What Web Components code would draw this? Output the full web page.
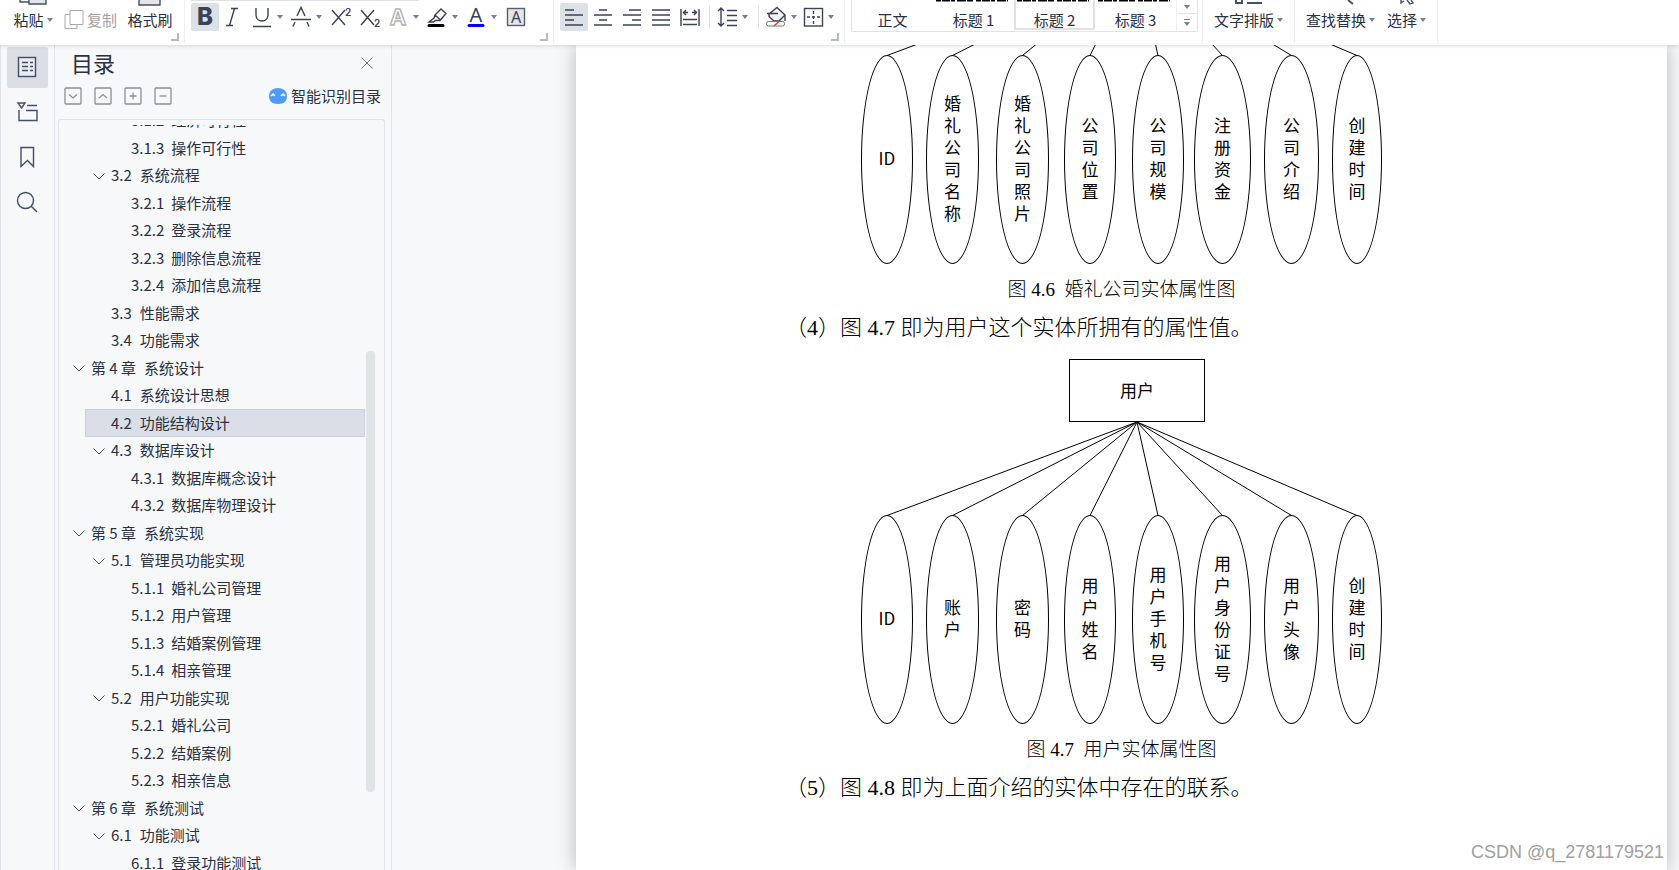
<!DOCTYPE html>
<html lang="zh-CN">
<head>
<meta charset="utf-8">
<title>文档编辑</title>
<style>
html,body{height:100%}
body{margin:0;overflow:hidden;background:#f6f8fa;color:#2a3042;font:15px/20px "Noto Sans CJK SC",sans-serif}
</style>
</head>
<body>
<office-app></office-app>
<script>
const reset = `*{box-sizing:border-box}button{font:inherit;color:inherit;background:none;border:0;padding:0;margin:0;border-radius:2px}svg{display:block;flex:none;overflow:visible}`;
function element(name, css, html) {
  customElements.define(name, class extends HTMLElement {
    constructor() {
      super();
      this.attachShadow({mode: 'open'}).innerHTML =
        `<style>${reset}${css}</style>` + (typeof html === 'function' ? html(this) : html);
    }
  });
}

const icons = {
  bold: `<text x="10" y="18" text-anchor="middle" font-family="Inter" font-weight="800" font-size="24" fill="currentColor">B</text>`,
  italic: `<path d="M8 1.500h7M3 18.500h7M11.500 1.500l-5 17"/>`,
  underline: `<path d="M4 1v7c0 8 12 8 12 0V1M1 19.500h18"/>`,
  strike: `<path d="M6 9 10 .5 14 9M0 12.500h20M4 15l-2 4.500M16 15l2 4.500"/>`,
  sup: `<path d="M1 3l13 15M14 3 1 18"/><text x="14" y="9" font-family="Inter" font-weight="600" font-size="10" fill="currentColor" stroke="none">2</text>`,
  sub: `<path d="M1 3l13 15M14 3 1 18"/><text x="14" y="20" font-family="Inter" font-weight="600" font-size="10" fill="currentColor" stroke="none">2</text>`,
  outline: `<text x="10" y="18" text-anchor="middle" font-family="Inter" font-weight="700" font-size="22" fill="#fff" stroke="#b4b4b4">A</text>`,
  marker: `<path d="M8 8l6-6 5 4.500-6 7H8.500l-2 1.500H2l5-4zM8 8l5.500 5" fill="none"/><path d="M2 18.500h14" stroke="#000" stroke-width="3" stroke-linecap="round"/>`,
  color: `<text x="10" y="15" text-anchor="middle" font-family="Noto Sans" font-size="20" fill="currentColor">A</text><path d="M3 18.500h14" stroke="#00f" stroke-width="3" stroke-linecap="round"/>`,
  boxed: `<rect x="1.500" y="1.500" width="17" height="17" fill="#e3e5e8" stroke="#5a6072"/><text x="10" y="16" text-anchor="middle" font-family="Noto Sans" font-size="16" fill="currentColor">A</text>`,
  left: `<path d="M1 3h9M1 8h18M1 13h9M1 18h18"/>`,
  center: `<path d="M6 3h8M1 8h18M6 13h8M1 18h18"/>`,
  right: `<path d="M7 3h12M1 8h18M10 13h9M1 18h18"/>`,
  justify: `<path d="M1 3h18M1 8h18M1 13h18M1 18h18"/>`,
  spread: `<path d="M1 2v17M19 2v17M3 12.500h14M3 17.500h14M3 5.500h5M12 5.500h5M6 3 3.500 5.500 6 8M14 3l2.500 2.500L14 8"/>`,
  spacing: `<path d="M4 1v18M1 4l3-3 3 3M1 16l3 3 3-3M10 3.500h10M10 8.500h10M10 13.500h10M10 18.500h10"/>`,
  bucket: `<path d="M3 7l8-6.500L19 8l-6 6H8L3 9.500zM1 6.500h11M19 8v6" fill="#f4f5f7"/><rect x=".5" y="14.500" width="18" height="4.500" rx="2" fill="#fff" stroke="#777" stroke-width="1"/><path d="M8 19l5-4.500" stroke="#e33"/>`,
  borders: `<rect x="1.500" y="1.500" width="18" height="17.500"/><path d="M10.500 4v13M4 10h13" stroke-dasharray="3 2"/>`,
  toc: `<rect x="1.500" y=".5" width="17" height="19" fill="#e9ecf0"/><path d="M5 5.500h6M5 9.500h6M5 13.500h6M13 5.500h3M13 9.500h3M13 13.500h3"/>`,
  frame: `<path d="M1 1h7L4.500 6zM10 3.500h10M2 8v10.500h18V8.500H9"/>`,
  bookmark: `<path d="M4 .5h12.500v19l-6-6-6.500 6z"/>`,
  search: `<circle cx="8.500" cy="8.500" r="8"/><path d="M14 14l6 6"/>`,
};
const icon = (n, s = 20) => `<svg width="${s}" height="${s}" viewBox="0 0 20 20" fill="none" stroke="currentColor" stroke-width="1.400" aria-hidden="true">${icons[n].replace(/<text (?![^>]*stroke=)/g, '<text stroke="none" ')}</svg>`;
const caret = `<svg class="caret" width="6" height="4" viewBox="0 0 6 4" aria-hidden="true"><path d="M0 0h6L3 4z" fill="#72809c"/></svg>`;

element('icon-button', `
:host{display:block;flex:none;width:28px}
button{display:flex;width:100%;height:28px;align-items:center;justify-content:center}
:host([on]) button{background:#dce1e6}
:host([narrow]){width:21px}
:host([split]){width:31px}
:host([split]) button{gap:5px;justify-content:flex-start}`,
  el => `<button aria-label="${el.getAttribute('label')}">${icon(el.getAttribute('icon'))}${el.hasAttribute('split') ? caret : ''}</button>`);

element('label-button', `
:host{display:block;flex:none;white-space:nowrap}
button{display:flex;flex-direction:column;align-items:center;width:100%}
span{display:flex;align-items:center;gap:3px;line-height:28px}
.top{height:6px}
:host([off]){color:#a3a3a3}`,
  el => `<button><div class="top"><slot name="icon"></slot></div><span><slot name="lead"></slot><slot></slot>${el.hasAttribute('menu') ? caret : ''}</span></button>`);

element('ribbon-group', `
:host{display:flex;flex:none;position:relative;height:43px;border-right:1px solid #eceef1}
:host([launcher])::after{content:"";position:absolute;right:5px;bottom:2px;width:6px;height:6px;border:solid #b4bccb;border-width:0 2px 2px 0}`,
  `<slot></slot>`);

element('style-gallery', `
:host{display:flex;width:347px;height:32px;border:solid #e0e2e7;border-width:0 1px 1px;border-radius:0 0 2px 2px}
button{width:81px;height:30px;display:flex;flex-direction:column;align-items:center;line-height:28px}
button[aria-pressed=true]{border:solid #dfe1e6;border-width:0 2px 2px}
button svg{height:6px}
.more{width:21px;border-left:1px solid #eceef1;display:grid;grid-template-rows:13px 18px}
.more button{width:100%;height:auto;justify-content:center}
.more button svg{height:auto}
.more button+button{border-top:1px solid #e4e6ea}`,
  () => ['正文', '标题 1', '标题 2', '标题 3'].map((t, i) =>
    `<button aria-pressed="${i === 2}"><svg width="76" height="6" aria-hidden="true">${i ? '<path d="M0 0h72" stroke="#000" stroke-width="3" stroke-dasharray="5 1 8 1 4 2 9 1 6 3"/>' : ''}</svg><span>${t}</span></button>`).join('') +
    `<div class="more"><button aria-label="向下">${caret}</button><button aria-label="更多样式"><svg width="6" height="8" viewBox="0 0 6 8" aria-hidden="true"><path d="M0 .5h6" stroke="#72809c"/><path d="M0 3h6L3 7z" fill="#72809c"/></svg></button></div>`);

element('ribbon-bar', `
:host{display:flex;flex:none;height:45px;background:#fff;box-shadow:0 1px 4px rgba(0,0,0,.14);position:relative;z-index:2}
.clip{width:185px;padding-left:9px;gap:3px}
.paste{width:48px}.copy{width:61px}.brush{width:52px}
.font{width:369px;padding:3px 0 0 6px}
.font::before{content:"";position:absolute;left:6px;top:0;width:228px;height:1px;background:#dfe1e6}
.letters{display:flex;gap:8px;margin-left:5px}
.para{width:291px;padding:3px 0 0 6px;gap:1px}
.para [split]{margin-right:5px}
hr{flex:none;width:1px;height:22px;margin:3px 6px 0 4px;border:0;background:#dfe1e6}
.styles{width:358px;padding-left:6px}
.layout{width:92px;padding-left:11px}
.edit{width:143px;padding-left:11px;gap:12px}
svg,icon-button{color:#3c4256}`,
  `<ribbon-group class="clip" launcher>
    <label-button class="paste" menu><svg slot="icon" width="28" height="5" viewBox="0 0 28 5" fill="none" stroke="#4a5062" stroke-width="1.400"><path d="M1 0v2h9M10 0v4h17V0" fill="#e3e5e8"/></svg>粘贴</label-button>
    <label-button class="copy" off><svg slot="lead" width="20" height="20" viewBox="0 0 20 20" fill="#fff" stroke="#a9a9a9"><path d="M1 4.500h12v14H1z"/><path d="M6 .5h13v14H6z"/></svg>复制</label-button>
    <label-button class="brush"><svg slot="icon" width="24" height="6" viewBox="0 0 24 6" fill="#e3e5e8" stroke="#4a5062" stroke-width="1.400"><path d="M1 0v5h21V0"/></svg>格式刷</label-button>
  </ribbon-group>
  <ribbon-group class="font" launcher>
    <icon-button icon="bold" label="加粗" on></icon-button>
    <icon-button icon="italic" label="倾斜"></icon-button>
    <div class="letters">
      <icon-button icon="underline" label="下划线" split></icon-button>
      <icon-button icon="strike" label="删除线" split></icon-button>
      <icon-button icon="sup" label="上标" narrow></icon-button>
      <icon-button icon="sub" label="下标" narrow></icon-button>
      <icon-button icon="outline" label="文字效果" split></icon-button>
      <icon-button icon="marker" label="突出显示" split></icon-button>
      <icon-button icon="color" label="字体颜色" split></icon-button>
      <icon-button icon="boxed" label="字符底纹" narrow></icon-button>
    </div>
  </ribbon-group>
  <ribbon-group class="para" launcher>
    <icon-button icon="left" label="左对齐" on></icon-button>
    <icon-button icon="center" label="居中"></icon-button>
    <icon-button icon="right" label="右对齐"></icon-button>
    <icon-button icon="justify" label="两端对齐"></icon-button>
    <icon-button icon="spread" label="分散对齐"></icon-button>
    <hr>
    <icon-button icon="spacing" label="行距" split></icon-button>
    <hr>
    <icon-button icon="bucket" label="底纹颜色" split></icon-button>
    <icon-button icon="borders" label="边框" split></icon-button>
  </ribbon-group>
  <ribbon-group class="styles"><style-gallery></style-gallery></ribbon-group>
  <ribbon-group class="layout">
    <label-button menu><svg slot="icon" width="28" height="5" viewBox="0 0 28 5" fill="none" stroke="#4a5062" stroke-width="2"><path d="M1 0v3h6V0M12 3h15"/></svg>文字排版</label-button>
  </ribbon-group>
  <ribbon-group class="edit">
    <label-button menu><svg slot="icon" width="28" height="5" viewBox="0 0 28 5" fill="none" stroke="#4a5062" stroke-width="2"><path d="M21 0l5 4"/></svg>查找替换</label-button>
    <label-button menu><svg slot="icon" width="14" height="5" viewBox="0 0 14 5" fill="none" stroke="#4a5062" stroke-width="1.400"><path d="M1 0v3l3-2M7 0l3 4 3-1-2-3"/></svg>选择</label-button>
  </ribbon-group>`);

element('side-rail', `
:host{display:flex;flex:none;flex-direction:column;gap:4px;width:55px;padding:2px 6px;border:solid #dfe2e9;border-width:0 1px}
button{width:41px;height:41px;padding:0 2px 2px 0;display:grid;place-items:center;color:#454d66}
.on{background:#dadee5}`,
  `<button class="on" aria-label="目录">${icon('toc')}</button><button aria-label="章节">${icon('frame')}</button><button aria-label="书签">${icon('bookmark')}</button><button aria-label="查找">${icon('search')}</button>`);

element('toc-entry', `
:host{display:flex;align-items:center;height:100%;padding-left:54px}
:host([level="2"]){padding-left:34px}
:host([level="1"]){padding-left:14px}
:host([current]){margin-left:26px;padding-left:7px;background:#dadee6;border:1px solid #c9d0dc}
a{display:flex;gap:8px;padding-bottom:1px;color:inherit;text-decoration:none;white-space:pre}
:host([level="3"]) a{gap:7px}
svg{margin-right:6px}`,
  el => `<svg width="12" height="8" viewBox="0 0 12 8" fill="none" stroke="#454d66" aria-hidden="true">${el.hasAttribute('open') ? '<path d="M.5 1.500 6 7l5.500-5.500"/>' : ''}</svg><a href="#"><span>${el.getAttribute('num')}</span><slot></slot></a>`);

const entries = `3 3.1.2 经济可行性|3 3.1.3 操作可行性|2+ 3.2 系统流程|3 3.2.1 操作流程|3 3.2.2 登录流程|3 3.2.3 删除信息流程|3 3.2.4 添加信息流程|2 3.3 性能需求|2 3.4 功能需求|1+ 第_4_章 系统设计|2 4.1 系统设计思想|2* 4.2 功能结构设计|2+ 4.3 数据库设计|3 4.3.1 数据库概念设计|3 4.3.2 数据库物理设计|1+ 第_5_章 系统实现|2+ 5.1 管理员功能实现|3 5.1.1 婚礼公司管理|3 5.1.2 用户管理|3 5.1.3 结婚案例管理|3 5.1.4 相亲管理|2+ 5.2 用户功能实现|3 5.2.1 婚礼公司|3 5.2.2 结婚案例|3 5.2.3 相亲信息|1+ 第_6_章 系统测试|2+ 6.1 功能测试|3 6.1.1 登录功能测试`.split('|').map(r => r.split(' '));

const square = (label, d) => `<button aria-label="${label}"><svg width="18" height="18" viewBox="0 0 18 18" fill="none" stroke="#8b8e94" stroke-width="1.300"><rect x="1" y="1" width="16" height="16" rx="1"/><path d="${d}"/></svg></button>`;
element('toc-panel', `
:host{display:flex;flex:none;flex-direction:column;width:337px;border-right:1px solid #dfe2e9}
header{display:flex;justify-content:space-between;align-items:center;height:36px;padding:0 18px 0 16px}
h2{margin:0 0 2px;font-size:22px;line-height:32px;font-weight:400}
.tools{display:flex;align-items:center;height:30px;margin-bottom:8px;padding:0 10px 0 9px;gap:12px}
.smart{display:flex;align-items:center;gap:4px;margin-left:auto}
.box{display:flex;flex:1;min-height:0;margin:0 6px 0 3px;padding-top:5px;border:1px solid #dfe2e6;border-bottom:0;border-radius:3px 3px 0 0}
nav{flex:1;overflow:hidden}
ul{list-style:none;margin:-18px 0 0;padding:0}
li{height:27px}li:nth-child(even){height:28px}
.bar{width:9px;height:441px;margin:226px 9px 0 1px;border-radius:4px;background:#dfe3e5}`,
  () => `<header><h2>目录</h2><button aria-label="关闭"><svg width="12" height="12" viewBox="0 0 12 12" stroke="#6b7285"><path d="M.5.5l11 11M11.500.5l-11 11"/></svg></button></header>
  <div class="tools">${square('展开', 'M5 7.500 9 11l4-3.500')}${square('收起', 'M5 11 9 7.500l4 3.500')}${square('增加', 'M5.500 9h7M9 5.500v7')}${square('减少', 'M5.500 9h7')}
    <button class="smart"><svg width="18" height="16" viewBox="0 0 18 16"><path d="M9 0c5 0 9 3 9 8s-3 8-9 8-9-3-9-8 4-8 9-8z" fill="#4e9bf5"/><path d="M2 8l2-2 2 2M12 8l2-2 2 2" fill="none" stroke="#fff" stroke-width="1.500"/></svg>智能识别目录</button></div>
  <div class="box"><nav aria-label="目录"><ul>${entries.map(([l, n, t]) =>
    `<li><toc-entry level="${l[0]}" num="${n.replace(/_/g, ' ')}"${l[1] === '+' ? ' open' : ''}${l[1] === '*' ? ' current' : ''}>${t}</toc-entry></li>`).join('')}</ul></nav><div class="bar"></div></div>`);

element('attribute-node', `
:host{display:grid;place-items:center;position:absolute;bottom:0;height:209px;padding-bottom:3px;border:1px solid #000;border-radius:50%}
div{width:17px;line-height:22px}`, `<div><slot></slot></div>`);

/* Entity box on top, its attributes as ellipses below; [continued] shows only the lower part. */
const spots = [[0, 52], [65, 53], [135, 53], [203, 52], [271, 52], [333, 57], [403, 55], [471, 50]];
element('entity-diagram', `
:host{display:flex;flex-direction:column;justify-content:flex-end;width:521px;height:365px;margin:0 auto;overflow:hidden;color:#000;font-size:17px}
:host([continued]){height:219px}
.canvas{position:relative;flex:none;height:365px}
.entity{display:grid;place-items:center;position:absolute;left:208px;top:0;width:136px;height:63px;padding-bottom:2px;border:1px solid #000}`,
  el => `<div class="canvas">
    <svg width="521" height="365" stroke="#000" aria-hidden="true">${spots.map(([x, w]) => `<path d="M276 63 ${x + w / 2} 156.500"/>`).join('')}</svg>
    ${el.hasAttribute('entity') ? `<div class="entity">${el.getAttribute('entity')}</div>` : ''}
    ${el.getAttribute('attributes').split(' ').map((t, i) => `<attribute-node style="left:${spots[i][0]}px;width:${spots[i][1]}px">${t}</attribute-node>`).join('')}
  </div>`);

element('document-page', `
:host{display:block;flex:1;background:#fff;box-shadow:0 0 18px rgba(0,0,0,.26);color:#000;font-family:"Liberation Serif","Noto Sans CJK SC",serif;font-weight:300}
entity-diagram{font-family:"Noto Sans CJK SC",sans-serif;font-weight:400}
figure{margin:0}
figcaption{margin-top:12px;text-align:center;font-size:19px;line-height:28px;white-space:pre}
p{margin:5px 0 12px;padding-left:209px;font-size:22px;line-height:38px}`,
  `<figure><entity-diagram continued attributes="ID 婚礼公司名称 婚礼公司照片 公司位置 公司规模 注册资金 公司介绍 创建时间"></entity-diagram><figcaption>图 4.6  婚礼公司实体属性图</figcaption></figure>
  <p>（4）图 4.7 即为用户这个实体所拥有的属性值。</p>
  <figure><entity-diagram entity="用户" attributes="ID 账户 密码 用户姓名 用户手机号 用户身份证号 用户头像 创建时间"></entity-diagram><figcaption>图 4.7  用户实体属性图</figcaption></figure>
  <p>（5）图 4.8 即为上面介绍的实体中存在的联系。</p>`);

element('office-app', `
:host{display:flex;flex-direction:column;height:100vh;position:relative}
main{display:flex;flex:1;min-height:0}
.desk{display:flex;flex:1;min-width:0;padding:0 12px 0 184px;overflow:hidden}
.mark{position:absolute;right:15px;bottom:7px;font:18px/22px "Liberation Sans",sans-serif;color:#a0a0a0}`,
  `<ribbon-bar></ribbon-bar><main><side-rail></side-rail><toc-panel></toc-panel><div class="desk"><document-page></document-page></div></main><div class="mark">CSDN @q_2781179521</div>`);
</script>
</body>
</html>
